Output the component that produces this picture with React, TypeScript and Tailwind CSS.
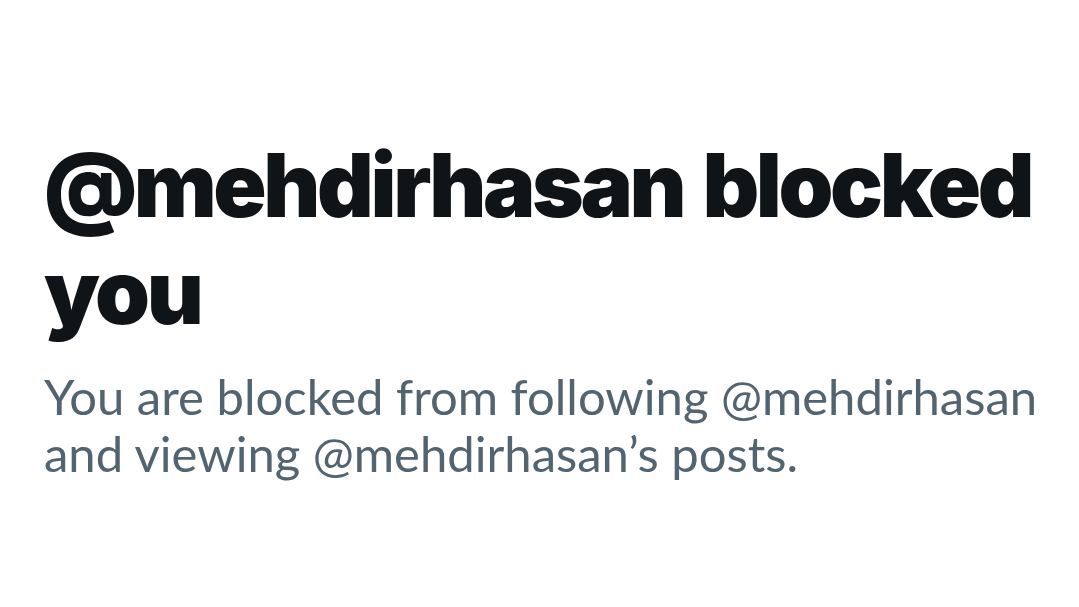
export default function App() {
  return (
    <div className="w-[1079px] h-[607px] bg-white overflow-hidden">
      <div className="pl-[44px] pt-[132px] pr-4">
        <h1
          className="text-[#0f1419] font-black text-[88px] leading-[107px] tracking-[-3.4px] [word-spacing:5px] whitespace-nowrap"
          style={{ fontFamily: "Inter, 'Noto Sans', sans-serif" }}
        >
          @mehdirhasan blocked
          <br />
          you
        </h1>
        <p
          className="mt-[22px] text-[#536471] text-[49px] leading-[57px] whitespace-nowrap"
          style={{ fontFamily: "Lato, 'Noto Sans', sans-serif" }}
        >
          You are blocked from following @mehdirhasan
          <br />
          and viewing @mehdirhasan’s posts.
        </p>
      </div>
    </div>
  );
}
